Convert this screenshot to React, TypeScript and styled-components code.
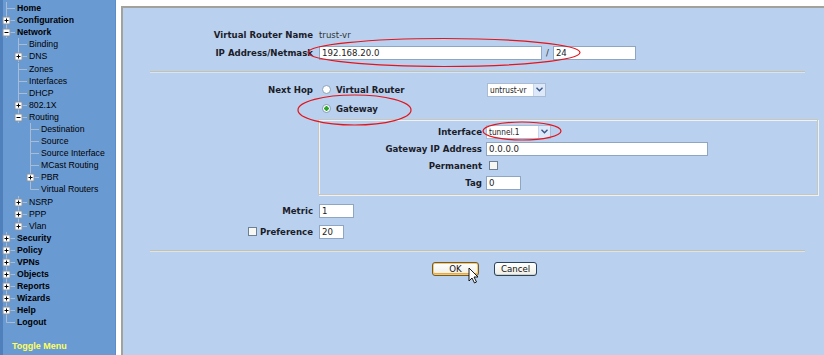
import React from 'react';
import styled, {createGlobalStyle} from 'styled-components';

const GlobalStyle = createGlobalStyle`
  html, body {
    margin: 0;
    padding: 0;
    background: #ffffff;
    overflow: hidden;
  }
`;

const Page = styled.div`
  position: relative;
  display: flex;
  width: 824px;
  height: 355px;
`;

const Sidebar = styled.nav`
  width: 116px;
  flex-shrink: 0;
  background: #6a9ad2;
  box-shadow: inset 3px 0 0 #5080bc, inset -1px 0 0 #5d8dc6;
  padding-top: 2px;
  display: flex;
  flex-direction: column;
  font-family: "Liberation Sans", Arial, sans-serif;
`;

const TreeRow = styled.div<{ $level: number }>`
  display: flex;
  align-items: center;
  height: 12.1px;
  padding-left: ${p => p.$level * 12}px;
`;

const TreeLabel = styled.span<{ $bold: boolean }>`
  margin-left: 1px;
  font-size: 8.7px;
  font-weight: ${p => (p.$bold ? 700 : 400)};
  color: #000;
  white-space: nowrap;
`;

const ToggleMenu = styled.div`
  margin-top: 12.5px;
  padding-left: 12px;
  font-size: 9px;
  font-weight: 700;
  color: #ffff5a;
`;

const Panel = styled.main`
  flex: 1;
  margin: 6px 0 0 5px;
  border-top: 2px solid #a2a29a;
  border-left: 2px solid #a2a29a;
  background: #b9d1ee;
  padding-top: 19px;
  font-family: "DejaVu Sans", Verdana, sans-serif;
  font-size: 8.6px;
  color: #1c1c2a;
`;

const Row = styled.div<{ $mt?: number; $cols?: string; $gap?: number }>`
  display: grid;
  grid-template-columns: ${p => p.$cols || '190px 1fr'};
  column-gap: ${p => p.$gap ?? 6}px;
  align-items: center;
  height: 15px;
  margin-top: ${p => p.$mt || 0}px;
`;

const BlockRow = styled.div<{ $mt?: number }>`
  display: grid;
  grid-template-columns: 190px 1fr;
  column-gap: 6px;
  margin-top: ${p => p.$mt || 0}px;
`;

const Label = styled.div`
  display: flex;
  justify-content: flex-end;
  align-items: center;
  gap: 3px;
  font-weight: 700;
  white-space: nowrap;
`;

const Field = styled.div`
  display: flex;
  align-items: center;
  white-space: nowrap;
`;

const Value = styled.span`
  color: #333;
`;

const Input = styled.input<{ $w: number }>`
  box-sizing: border-box;
  width: ${p => p.$w}px;
  height: 14px;
  margin: 0;
  padding: 0 2px;
  border: 1px solid #8ea6c2;
  background: #fff;
  font-family: "DejaVu Sans", Verdana, sans-serif;
  font-size: 8.6px;
  color: #222;
  outline: none;
`;

const Slash = styled.span`
  margin: 0 4px;
  color: #333;
`;

const Separator = styled.hr<{ $mt: number }>`
  margin: ${p => p.$mt}px 19px 0 27px;
  height: 0;
  border: 0;
  border-top: 1px solid #c6c2aa;
  border-bottom: 1px solid #d8e4f2;
`;

const RadioOption = styled.div<{ $w?: number }>`
  display: flex;
  align-items: center;
  width: ${p => (p.$w ? `${p.$w}px` : 'auto')};
  font-weight: 700;
`;

const Radio = styled.span<{ $checked?: boolean }>`
  box-sizing: border-box;
  width: 9px;
  height: 9px;
  margin: 0 5px 0 3px;
  border-radius: 50%;
  border: 1px solid #8aa0b8;
  background: ${p =>
    p.$checked
      ? 'radial-gradient(circle, #2aa52a 0 2px, #fff 2.4px)'
      : '#fff'};
`;

const Select = styled.div<{ $w: number }>`
  box-sizing: border-box;
  display: flex;
  align-items: center;
  justify-content: space-between;
  width: ${p => p.$w}px;
  height: 14px;
  border: 1px solid #a9bcd4;
  background: #fff;
  padding-left: 2px;
  font-family: "DejaVu Sans Condensed", "DejaVu Sans", sans-serif;
  font-size: 8.2px;
  color: #222;
  overflow: hidden;
`;

const SelectArrow = styled.span`
  display: flex;
  flex-shrink: 0;
  align-items: center;
  justify-content: center;
  width: 11px;
  height: 12px;
  background: #dde8f8;
  border-left: 1px solid #c7d6ee;
`;

const Checkbox = styled.span<{ $ml?: number }>`
  box-sizing: border-box;
  display: inline-block;
  width: 9px;
  height: 9px;
  margin-left: ${p => p.$ml || 0}px;
  border: 1px solid #6d7f93;
  background: #f7f7f4;
`;

const GatewayBox = styled.fieldset`
  margin: 0 0 0 -1px;
  width: 500px;
  box-sizing: border-box;
  padding: 4px 0 4px 0;
  border: 1px solid #c8c7bd;
  box-shadow: inset 1px 1px 0 #eef2f7, 1px 1px 0 #eef2f7;
  min-width: 0;
`;

const ButtonBar = styled.div`
  display: flex;
  justify-content: center;
  gap: 15px;
  margin-top: 10px;
  padding-left: 22px;
`;

const Button = styled.button<{ $hover?: boolean; $w: number }>`
  box-sizing: border-box;
  width: ${p => p.$w}px;
  height: 14px;
  padding: 0;
  border-radius: 3px;
  font-family: "DejaVu Sans", Verdana, sans-serif;
  font-size: 8.6px;
  color: #111;
  cursor: pointer;
  border: 1px solid ${p => (p.$hover ? '#6f5a32' : '#27435f')};
  background: linear-gradient(#ffffff, #efeee6);
  box-shadow: ${p =>
    p.$hover ? 'inset 0 0 0 1px #f7c86a, inset 0 -1px 0 1px #eea840' : 'inset 0 -1px 0 #d6d2c4'};
`;

const Overlay = styled.svg`
  position: absolute;
  left: 0;
  top: 0;
  pointer-events: none;
`;

type Node = { label: string; level: number; box?: '+' | '-'; last?: boolean };

const tree: Node[] = [
  {label: 'Home', level: 0},
  {label: 'Configuration', level: 0, box: '+'},
  {label: 'Network', level: 0, box: '-'},
  {label: 'Binding', level: 1},
  {label: 'DNS', level: 1, box: '+'},
  {label: 'Zones', level: 1},
  {label: 'Interfaces', level: 1},
  {label: 'DHCP', level: 1},
  {label: '802.1X', level: 1, box: '+'},
  {label: 'Routing', level: 1, box: '-'},
  {label: 'Destination', level: 2},
  {label: 'Source', level: 2},
  {label: 'Source Interface', level: 2},
  {label: 'MCast Routing', level: 2},
  {label: 'PBR', level: 2, box: '+'},
  {label: 'Virtual Routers', level: 2, last: true},
  {label: 'NSRP', level: 1, box: '+'},
  {label: 'PPP', level: 1, box: '+'},
  {label: 'Vlan', level: 1, box: '+', last: true},
  {label: 'Security', level: 0, box: '+'},
  {label: 'Policy', level: 0, box: '+'},
  {label: 'VPNs', level: 0, box: '+'},
  {label: 'Objects', level: 0, box: '+'},
  {label: 'Reports', level: 0, box: '+'},
  {label: 'Wizards', level: 0, box: '+'},
  {label: 'Help', level: 0, box: '+'},
  {label: 'Logout', level: 0, last: true},
];

// connector lines + expand box for one tree node
const TreeNode = ({box, last}: { box?: '+' | '-'; last?: boolean }) => (
  <svg width="16" height="12" viewBox="0 0 16 12">
    <line x1="6.5" y1="0" x2="6.5" y2={last ? 6.5 : 12} stroke="#a8bcd6" strokeWidth="1"/>
    <line x1="6.5" y1="6.5" x2="15" y2="6.5" stroke="#a8bcd6" strokeWidth="1"/>
    {box && (
      <g>
        <rect x="3" y="3" width="7" height="7" fill="#fff" stroke="#8a96a4" strokeWidth="1"/>
        <line x1="4.5" y1="6.5" x2="8.5" y2="6.5" stroke="#000" strokeWidth="1"/>
        {box === '+' && <line x1="6.5" y1="4.5" x2="6.5" y2="8.5" stroke="#000" strokeWidth="1"/>}
      </g>
    )}
  </svg>
);

const Chevron = () => (
  <svg width="7" height="5" viewBox="0 0 7 5">
    <path d="M0.5 0.8 L3.5 3.8 L6.5 0.8" fill="none" stroke="#3a5587" strokeWidth="1.4"/>
  </svg>
);

const App = () => {
  return (
    <Page>
      <GlobalStyle/>
      <Sidebar>
        {tree.map(n => (
          <TreeRow key={n.label} $level={n.level}>
            <TreeNode box={n.box} last={n.last}/>
            <TreeLabel $bold={n.level === 0}>{n.label}</TreeLabel>
          </TreeRow>
        ))}
        <ToggleMenu>Toggle Menu</ToggleMenu>
      </Sidebar>

      <Panel>
        <Row>
          <Label>Virtual Router Name</Label>
          <Field><Value>trust-vr</Value></Field>
        </Row>
        <Row $mt={3}>
          <Label>IP Address/Netmask</Label>
          <Field>
            <Input $w={223} readOnly value="192.168.20.0"/>
            <Slash>/</Slash>
            <Input $w={83} readOnly value="24"/>
          </Field>
        </Row>

        <Separator $mt={11}/>

        <Row $mt={9}>
          <Label>Next Hop</Label>
          <Field>
            <RadioOption $w={168}><Radio/>Virtual Router</RadioOption>
            <Select $w={59}>untrust-vr<SelectArrow><Chevron/></SelectArrow></Select>
          </Field>
        </Row>
        <Row $mt={4}>
          <Label/>
          <Field>
            <RadioOption><Radio $checked/>Gateway</RadioOption>
          </Field>
        </Row>

        <BlockRow $mt={3}>
          <div/>
          <GatewayBox>
            <Row $cols="163px 1fr" $gap={4}>
              <Label>Interface</Label>
              <Field>
                <Select $w={65}>tunnel.1<SelectArrow><Chevron/></SelectArrow></Select>
              </Field>
            </Row>
            <Row $mt={2} $cols="163px 1fr" $gap={4}>
              <Label>Gateway IP Address</Label>
              <Field><Input $w={222} readOnly value="0.0.0.0"/></Field>
            </Row>
            <Row $mt={2} $cols="163px 1fr" $gap={4}>
              <Label>Permanent</Label>
              <Field><Checkbox $ml={3}/></Field>
            </Row>
            <Row $mt={2} $cols="163px 1fr" $gap={4}>
              <Label>Tag</Label>
              <Field><Input $w={35} readOnly value="0"/></Field>
            </Row>
          </GatewayBox>
        </BlockRow>

        <Row $mt={8}>
          <Label>Metric</Label>
          <Field><Input $w={35} readOnly value="1"/></Field>
        </Row>
        <Row $mt={6}>
          <Label><Checkbox/>Preference</Label>
          <Field><Input $w={25} readOnly value="20"/></Field>
        </Row>

        <Separator $mt={11}/>

        <ButtonBar>
          <Button $hover $w={47}>OK</Button>
          <Button $w={43}>Cancel</Button>
        </ButtonBar>
      </Panel>

      <Overlay width="824" height="355" viewBox="0 0 824 355">
        <g fill="none" stroke="#e3141c" strokeWidth="1.2">
          <ellipse cx="444" cy="52.5" rx="136" ry="14"/>
          <ellipse cx="354.5" cy="110" rx="56.5" ry="15"/>
          <ellipse cx="522" cy="131" rx="39" ry="9"/>
        </g>
        <path
          d="M469 268 L469 281 L472 278 L474.5 283 L476.5 282 L474 277 L478 277 Z"
          fill="#fff"
          stroke="#000"
          strokeWidth="0.9"
          strokeLinejoin="round"
        />
      </Overlay>
    </Page>
  );
};

export default App;
